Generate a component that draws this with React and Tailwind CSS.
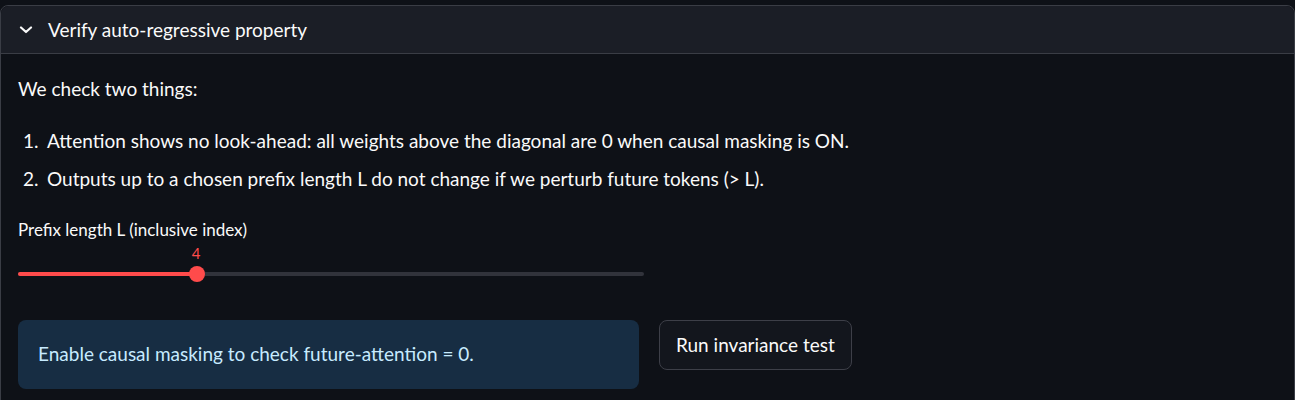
import React from "react";

export default function App() {
  return (
    <div className="w-[1295px] h-[400px] bg-[#0e1117] overflow-hidden pt-[5px] font-['Lato',sans-serif] text-[#fafafa]">
      <div className="border border-[#3a3d45] rounded-t-lg w-[1295px] h-[420px]">
        <div className="h-[48px] bg-[#1b1e26] rounded-t-lg border-b border-[#3a3d45] flex items-center">
          <svg width="14" height="8" viewBox="0 0 14 8" className="ml-[18px] mr-[15px]" fill="none">
            <path d="M2 1.5 L7 6 L12 1.5" stroke="#fafafa" strokeWidth="2.2" strokeLinecap="round" strokeLinejoin="round" />
          </svg>
          <span className="text-[19px] leading-6">Verify auto-regressive property</span>
        </div>
        <div className="pl-[17px] pt-[23px]">
          <p className="text-[19px] leading-6">We check two things:</p>
          <div className="mt-[28px] flex flex-col gap-[14px]">
            <div className="flex text-[19px] leading-6">
              <span className="ml-[5px] w-[24px]">1.</span>
              <span>Attention shows no look-ahead: all weights above the diagonal are 0 when causal masking is ON.</span>
            </div>
            <div className="flex text-[19px] leading-6">
              <span className="ml-[5px] w-[24px]">2.</span>
              <span>Outputs up to a chosen prefix length L do not change if we perturb future tokens (&gt; L).</span>
            </div>
          </div>
          <p className="mt-[29px] text-[17px] leading-5">Prefix length L (inclusive index)</p>
          <div className="relative w-[626px] h-[40px] mt-[1px]">
            <span className="absolute left-[172px] top-[4px] w-[12px] text-center text-[15px] leading-4 text-[#ff4b4b]">4</span>
            <div className="absolute left-0 right-0 top-[31px] h-[4px] rounded-full bg-[#31333b]" />
            <div className="absolute left-0 w-[179px] top-[31px] h-[4px] rounded-full bg-[#ff4b4b]" />
            <div className="absolute left-[171px] top-[25px] w-[16px] h-[16px] rounded-full bg-[#ff4b4b]" />
          </div>
          <div className="mt-[39px] flex items-start gap-[20px]">
            <div className="w-[621px] h-[69px] rounded-lg bg-[#172d43] flex items-center pl-[20px]">
              <span className="text-[19px] text-[#c7ebff]">Enable causal masking to check future-attention = 0.</span>
            </div>
            <button className="h-[50px] px-[16px] rounded-lg border border-[#3d3f48] bg-[#13161d] text-[19px] text-[#fafafa]">
              Run invariance test
            </button>
          </div>
        </div>
      </div>
    </div>
  );
}
